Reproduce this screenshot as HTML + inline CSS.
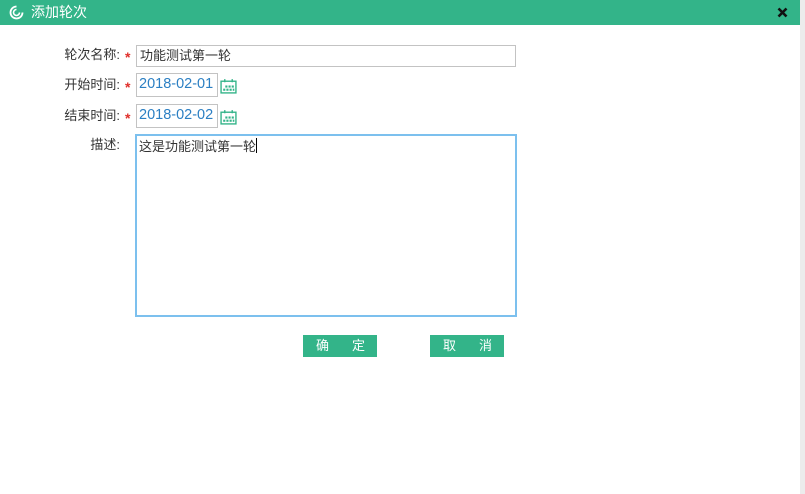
<!DOCTYPE html>
<html><head><meta charset="utf-8"><style>
*{margin:0;padding:0;box-sizing:border-box}
body{width:805px;height:494px;background:#fff;position:relative;overflow:hidden;font-family:"Liberation Sans","Noto Sans CJK SC",sans-serif;font-size:13px;color:#333}
.hd{position:absolute;left:0;top:0;width:800px;height:25px;background:#33b489;color:#fff}
.hd .t{position:absolute;left:31px;top:4px;font-size:14px;line-height:17px}
.sb{position:absolute;left:800px;top:0;width:5px;height:494px;background:#ececec}
.lb{position:absolute;left:60px;width:60px;text-align:right;font-size:13px;color:#333;line-height:16px}
.st{position:absolute;left:125px;color:#e0302b;font-size:14px;line-height:16px;font-weight:bold}
.in{position:absolute;border:1px solid #c3c3c3;background:#fff;line-height:19px;padding-left:3px;font-size:13px}
.btn{position:absolute;top:335px;width:74px;height:22px;background:#33b489;color:#fff;font-size:13px;line-height:22px}
.btn span{position:absolute;top:0}
</style></head><body>
<div class="hd">
<svg style="position:absolute;left:9px;top:5px" width="15" height="15" viewBox="0 0 15 15"><path d="M7.5 1.5a6 6 0 1 0 6 6" fill="none" stroke="#fff" stroke-width="1.8"/><path d="M7.5 4.5a3 3 0 1 0 3 3" fill="none" stroke="#fff" stroke-width="1.6"/></svg>
<div class="t">添加轮次</div>
<svg style="position:absolute;left:777px;top:7px" width="11" height="11" viewBox="0 0 11 11"><path d="M1.5 1.5L9.5 9.5M9.5 1.5L1.5 9.5" stroke="#111" stroke-width="2.6"/></svg>
</div>
<div class="sb"></div>

<div class="lb" style="top:47px">轮次名称:</div><div class="st" style="top:49px">*</div>
<div class="in" style="left:136px;top:45px;width:380px;height:22px;color:#333">功能测试第一轮</div>

<div class="lb" style="top:77px">开始时间:</div><div class="st" style="top:79px">*</div>
<div class="in" style="left:136px;top:73px;width:82px;height:24px;color:#2b7fc3;line-height:20px;font-size:14.5px;padding-left:2px">2018-02-01</div>
<svg style="position:absolute;left:220px;top:78px" width="17" height="16" viewBox="0 0 16 15"><rect x="1" y="3" width="14" height="11" fill="none" stroke="#33b489" stroke-width="1.3"/><path d="M4.5 1v3M11.5 1v3" stroke="#33b489" stroke-width="1.3"/><g fill="#33b489"><rect x="5" y="7" width="2" height="2"/><rect x="8" y="7" width="2" height="2"/><rect x="11" y="7" width="2" height="2"/><rect x="3" y="10" width="2" height="2"/><rect x="6" y="10" width="2" height="2"/><rect x="9" y="10" width="2" height="2"/><rect x="12" y="10" width="1.5" height="2"/></g></svg>

<div class="lb" style="top:108px">结束时间:</div><div class="st" style="top:110px">*</div>
<div class="in" style="left:136px;top:104px;width:82px;height:24px;color:#2b7fc3;line-height:20px;font-size:14.5px;padding-left:2px">2018-02-02</div>
<svg style="position:absolute;left:220px;top:109px" width="17" height="16" viewBox="0 0 16 15"><rect x="1" y="3" width="14" height="11" fill="none" stroke="#33b489" stroke-width="1.3"/><path d="M4.5 1v3M11.5 1v3" stroke="#33b489" stroke-width="1.3"/><g fill="#33b489"><rect x="5" y="7" width="2" height="2"/><rect x="8" y="7" width="2" height="2"/><rect x="11" y="7" width="2" height="2"/><rect x="3" y="10" width="2" height="2"/><rect x="6" y="10" width="2" height="2"/><rect x="9" y="10" width="2" height="2"/><rect x="12" y="10" width="1.5" height="2"/></g></svg>

<div class="lb" style="top:137px">描述:</div>
<div style="position:absolute;left:135px;top:134px;width:382px;height:183px;border:2px solid #7cc0ee;padding:2px 0 0 2px;line-height:17px">这是功能测试第一轮<span style="display:inline-block;width:1px;height:15px;background:#000;vertical-align:-2px"></span></div>

<div class="btn" style="left:303px"><span style="left:13px">确</span><span style="left:49px">定</span></div>
<div class="btn" style="left:430px"><span style="left:13px">取</span><span style="left:49px">消</span></div>
</body></html>
